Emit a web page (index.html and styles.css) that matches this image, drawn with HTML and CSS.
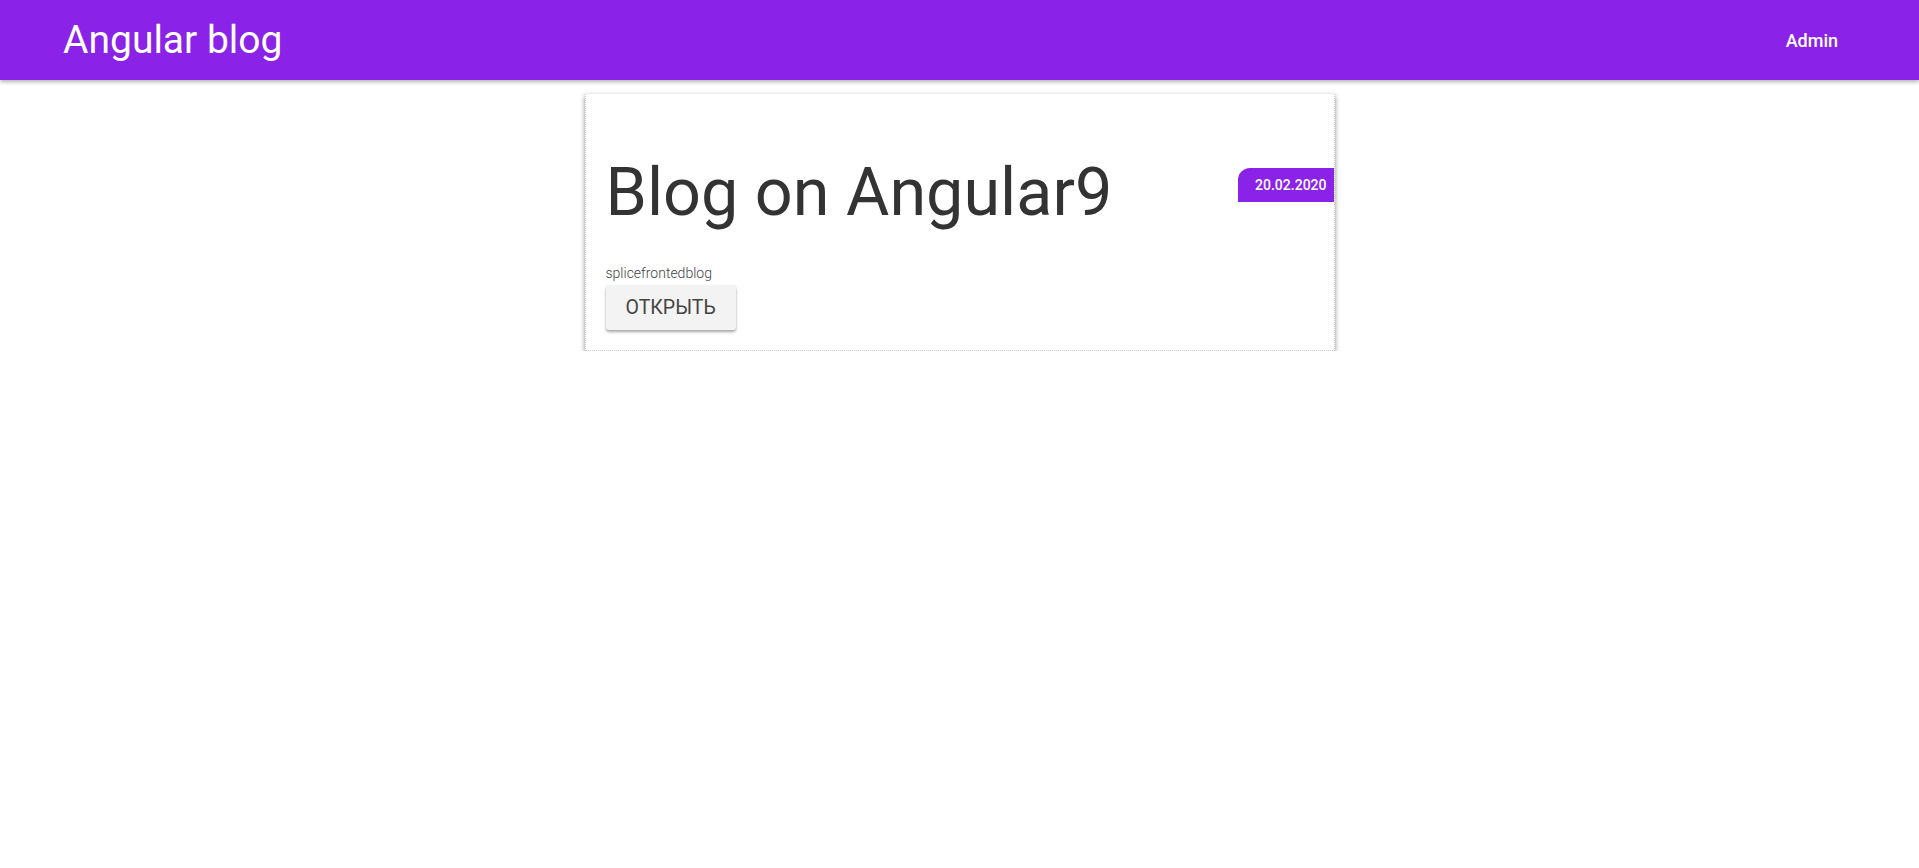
FILE: index.html
```html
<!DOCTYPE html>
<html lang="ru">
<head>
<meta charset="utf-8">
<title>Angular blog</title>
<link rel="stylesheet" href="styles.css">
</head>
<body>
<header class="toolbar">
  <span class="brand">Angular blog</span>
  <a class="nav-link" href="#">Admin</a>
</header>
<main class="content">
  <article class="post-card">
    <div class="post-head">
      <h1 class="post-title">Blog on Angular9</h1>
      <span class="post-date">20.02.2020</span>
    </div>
    <p class="post-author">splicefrontedblog</p>
    <button class="open-btn" type="button">ОТКРЫТЬ</button>
  </article>
</main>
</body>
</html>
```
FILE: styles.css
```css
* { box-sizing: border-box; }
html, body {
  margin: 0;
  padding: 0;
  background: #fff;
  font-family: Roboto, "Liberation Sans", sans-serif;
}
.toolbar {
  height: 80px;
  background: #8a22e8;
  color: #fff;
  display: flex;
  align-items: center;
  justify-content: space-between;
  padding: 0 64px 0 63px;
  box-shadow: 0 2px 4px rgba(0,0,0,0.3);
  position: relative;
  z-index: 1;
}
.brand {
  font-size: 39px;
  font-weight: 400;
}
.nav-link {
  color: #fff;
  text-decoration: none;
  font-size: 18px;
  font-weight: 500;
  padding: 0 17px;
}
.content {
  display: flex;
  justify-content: center;
  padding-top: 14px;
}
.post-card {
  width: 750px;
  padding: 20px 20px 20px 20px;
  border: 1px dotted #c8c8c8;
  border-top: none;
  box-shadow: 0 2px 5px rgba(0,0,0,0.45);
  background: #fff;
}
.post-head {
  display: flex;
  align-items: flex-start;
  justify-content: space-between;
  margin-top: 45px;
}
.post-title {
  margin: 0;
  font-size: 66.5px;
  font-weight: 400;
  line-height: 67px;
  color: #333;
}
.post-date {
  margin-top: 9px;
  margin-right: -20px;
  height: 34px;
  line-height: 34px;
  padding: 0 7px 0 17px;
  background: #8a22e8;
  color: #fff;
  font-size: 14px;
  font-weight: 500;
  border-top-left-radius: 12px;
}
.post-author {
  margin: 39px 0 4px 0;
  font-size: 14px;
  font-weight: 300;
  color: #444;
}
.open-btn {
  display: block;
  height: 45px;
  line-height: 45px;
  padding: 0 20px;
  border: none;
  border-radius: 3px;
  background: #f3f3f3;
  color: #444;
  font-family: Roboto, "Liberation Sans", sans-serif;
  font-size: 19.5px;
  font-weight: 400;
  box-shadow: 0 2px 3px rgba(0,0,0,0.35);
}
```
